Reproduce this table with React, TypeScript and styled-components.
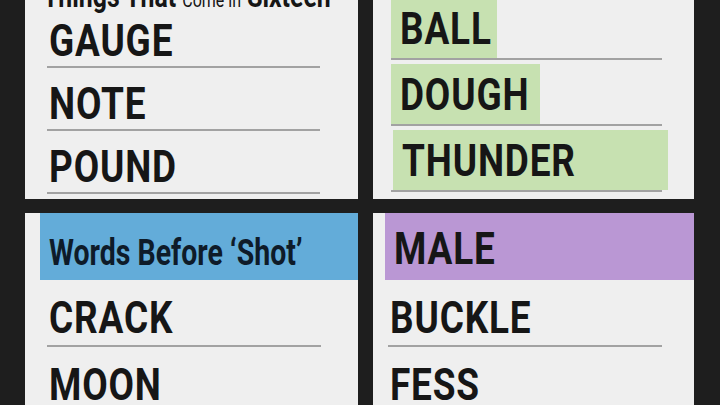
import React from 'react'
import styled, { createGlobalStyle } from 'styled-components'

const ink = '#161616'
const rule = '#a2a2a2'
const paper = '#efefef'

const GlobalStyle = createGlobalStyle`
  html, body {
    margin: 0;
    padding: 0;
    background: #1e1e1e;
  }
  * {
    box-sizing: border-box;
  }
`

const Board = styled.main`
  width: 720px;
  height: 405px;
  overflow: hidden;
  background: #1e1e1e;
  display: grid;
  grid-template-columns: 333px 321px;
  grid-template-rows: 199px 1fr;
  column-gap: 15px;
  row-gap: 14px;
  padding-left: 25px;
  font-family: Roboto, 'Liberation Sans', sans-serif;
`

const Panel = styled.section`
  background: ${paper};
  display: flex;
  flex-direction: column;
  min-height: 0;
  overflow: hidden;
`

const TitleBar = styled.div`
  height: 5px;
  padding-left: 18px;
`

const TitleText = styled.h2`
  margin: -19px 0 0;
  font-size: 31px;
  line-height: 31px;
  font-weight: 700;
  color: ${ink};
  white-space: nowrap;
  transform: scaleX(0.8);
  transform-origin: left center;
`

const TitleAside = styled.span`
  font-size: 20px;
  font-weight: 400;
`

const WordList = styled.ul<{ $left: number; $right: number; $top?: number }>`
  list-style: none;
  margin: ${(p) => p.$top ?? 0}px ${(p) => p.$right}px 0 ${(p) => p.$left}px;
  padding: 0;
`

const WordRow = styled.li<{ $height: number; $pad?: number }>`
  height: ${(p) => p.$height}px;
  display: flex;
  align-items: flex-end;
  padding: 0 0 ${(p) => p.$pad ?? 5}px 2px;
  border-bottom: 2px solid ${rule};
`

const HighlightRow = styled.li`
  height: 66px;
  padding-top: 4px;
  display: flex;
  border-bottom: 2px solid ${rule};
`

const Highlight = styled.div<{ $width: number; $shift?: number }>`
  flex: none;
  width: ${(p) => p.$width}px;
  height: 60px;
  margin-left: ${(p) => p.$shift ?? 0}px;
  background: #c7e1b1;
  display: flex;
  align-items: flex-end;
  padding: 0 0 7px 9px;
`

const Word = styled.span`
  display: inline-block;
  font-size: 44px;
  line-height: 44px;
  font-weight: 700;
  letter-spacing: 1px;
  color: ${ink};
  white-space: nowrap;
  transform: scaleX(0.84);
  transform-origin: left bottom;
`

const GroupHeader = styled.header<{ $color: string; $inset: number }>`
  flex: none;
  height: 67px;
  margin-left: ${(p) => p.$inset}px;
  background: ${(p) => p.$color};
  display: flex;
  align-items: flex-end;
  padding: 0 0 9px 9px;
`

const HeaderText = styled.h3`
  margin: 0;
  font-size: 37px;
  line-height: 36px;
  font-weight: 700;
  color: #0e1b29;
  white-space: nowrap;
  transform: scaleX(0.77);
  transform-origin: left bottom;
`

const greens = [
  { word: 'BALL', width: 106, shift: 0 },
  { word: 'DOUGH', width: 149, shift: 0 },
  { word: 'THUNDER', width: 275, shift: 2 },
]

export default function App() {
  return (
    <>
      <GlobalStyle />
      <Board>
        <Panel>
          <TitleBar>
            <TitleText>
              Things That <TitleAside>Come in</TitleAside> Sixteen
            </TitleText>
          </TitleBar>
          <WordList $left={22} $right={38}>
            {['GAUGE', 'NOTE', 'POUND'].map((w) => (
              <WordRow key={w} $height={63} $pad={3}>
                <Word>{w}</Word>
              </WordRow>
            ))}
          </WordList>
        </Panel>

        <Panel>
          <WordList $left={18} $right={32} $top={-6}>
            {greens.map((g) => (
              <HighlightRow key={g.word}>
                <Highlight $width={g.width} $shift={g.shift}>
                  <Word>{g.word}</Word>
                </Highlight>
              </HighlightRow>
            ))}
          </WordList>
        </Panel>

        <Panel>
          <GroupHeader $color="#63acd9" $inset={15}>
            <HeaderText>Words Before ‘Shot’</HeaderText>
          </GroupHeader>
          <WordList $left={22} $right={37}>
            {['CRACK', 'MOON'].map((w) => (
              <WordRow key={w} $height={67}>
                <Word>{w}</Word>
              </WordRow>
            ))}
          </WordList>
        </Panel>

        <Panel>
          <GroupHeader $color="#ba97d4" $inset={12}>
            <Word>MALE</Word>
          </GroupHeader>
          <WordList $left={15} $right={32}>
            {['BUCKLE', 'FESS'].map((w) => (
              <WordRow key={w} $height={67}>
                <Word>{w}</Word>
              </WordRow>
            ))}
          </WordList>
        </Panel>
      </Board>
    </>
  )
}
